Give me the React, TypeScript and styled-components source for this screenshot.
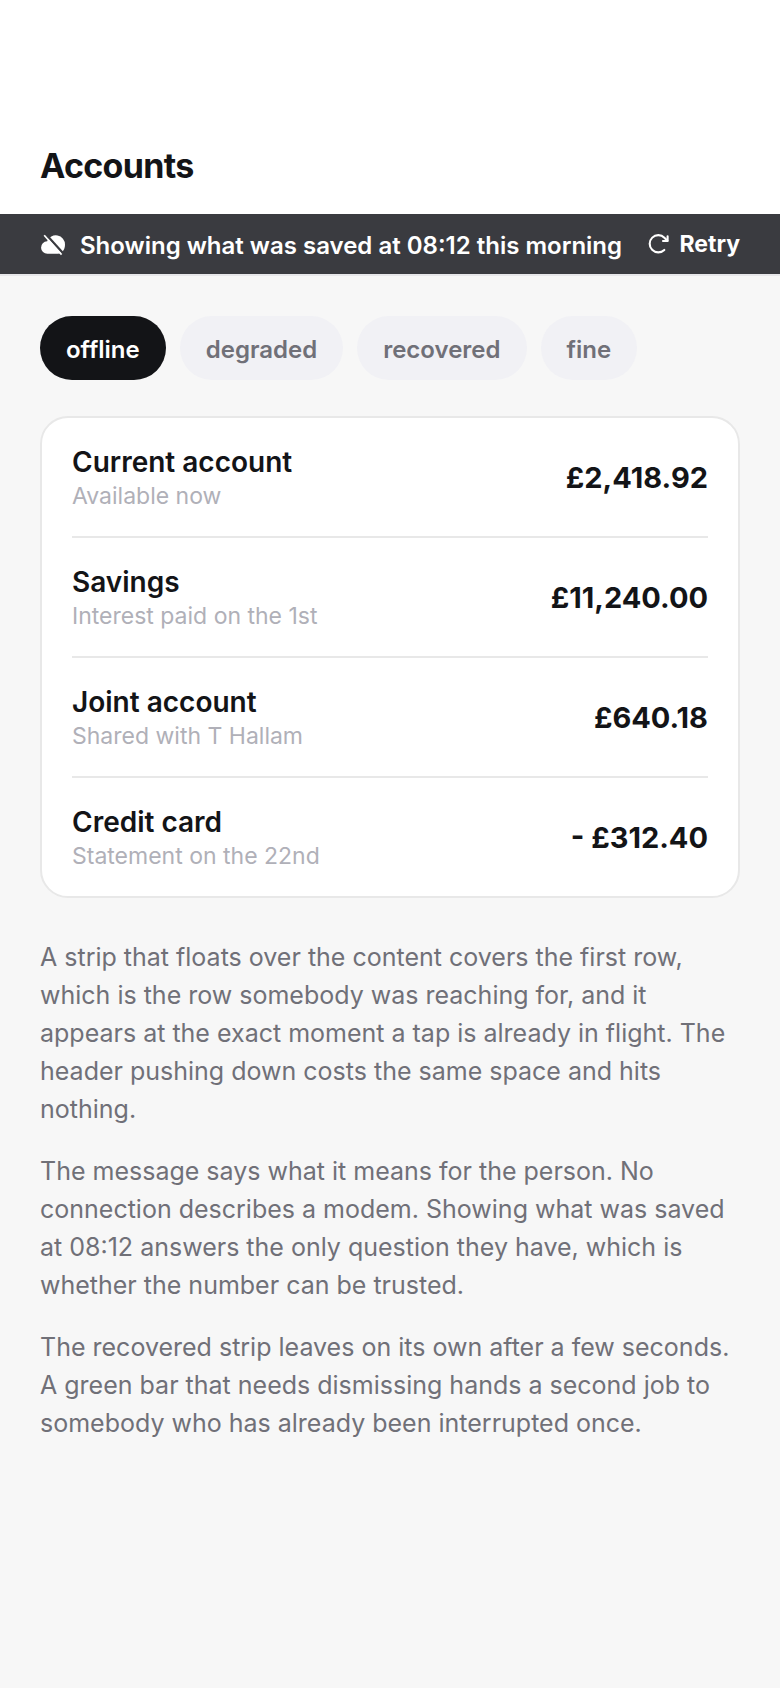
import { useState } from "react";
import styled, { createGlobalStyle } from "styled-components";

const GlobalStyle = createGlobalStyle`
  *, *::before, *::after { box-sizing: border-box; }
  body {
    margin: 0;
    background: #f7f7f7;
    color: #131417;
    font-family: Inter, "Liberation Sans", sans-serif;
  }
  h1, h2, p, ul { margin: 0; padding: 0; }
  button { font: inherit; border: 0; cursor: pointer; }
`;

const Header = styled.header`
  padding-top: 118px;
  background: #ffffff;
  border-bottom: 2px solid #e7e7ea;
`;

const Title = styled.h1`
  padding: 24px 40px 24px;
  font-size: 34px;
  line-height: 48px;
  font-weight: 700;
  letter-spacing: -0.02em;
`;

const Strip = styled.div`
  display: flex;
  align-items: center;
  gap: 14px;
  min-height: 60px;
  padding: 0 40px;
  background: #3a3b40;
  color: #ffffff;
  font-size: 24px;
  line-height: 32px;
  font-weight: 600;

  svg { flex: none; }
`;

const StripMessage = styled.p`
  flex: 1;
  padding-top: 4px;
`;

const RetryButton = styled.button`
  display: flex;
  align-items: center;
  gap: 9px;
  padding: 0;
  background: none;
  color: inherit;
  font-size: 23px;
  font-weight: 700;
`;

const Content = styled.main`
  display: flex;
  flex-direction: column;
  padding: 40px;
`;

const Chips = styled.div`
  display: flex;
  flex-wrap: wrap;
  gap: 14px;
  margin-bottom: 36px;
`;

const Chip = styled.button<{ $active: boolean }>`
  padding: 18px 26px 14px;
  border-radius: 32px;
  background: ${({ $active }) => ($active ? "#131417" : "#f1f1f5")};
  color: ${({ $active }) => ($active ? "#ffffff" : "#707078")};
  font-size: 24px;
  line-height: 32px;
  font-weight: 600;
`;

const Card = styled.ul`
  margin-bottom: 40px;
  padding: 0 30px;
  list-style: none;
  background: #ffffff;
  border: 2px solid #e8e8e8;
  border-radius: 28px;
`;

const Account = styled.li`
  display: flex;
  align-items: center;
  justify-content: space-between;
  gap: 24px;
  padding: 25px 0;

  & + & { border-top: 2px solid #e8e8e8; }
`;

const AccountName = styled.h2`
  font-size: 28px;
  line-height: 38px;
  font-weight: 600;
`;

const AccountNote = styled.p`
  color: #b0b0b8;
  font-size: 23px;
  line-height: 30px;
`;

const Amount = styled.span`
  padding-top: 2px;
  font-size: 29px;
  line-height: 38px;
  font-weight: 700;
  white-space: nowrap;
`;

const Notes = styled.section`
  display: flex;
  flex-direction: column;
  gap: 24px;
  color: #707078;
  font-size: 25px;
  line-height: 38px;
`;

const CloudOffIcon = () => (
  <svg width="26" height="24" viewBox="0 0 26 24" fill="none" aria-hidden>
    <path
      d="M7.5 21.8A6.3 6.3 0 0 1 7.2 9.2A9.2 9.2 0 0 1 25 12.6C25 17.8 22 21.8 18 21.8Z"
      fill="#ffffff"
    />
    <path d="M4.5 .8L24 22.4" stroke="#3a3b40" strokeWidth="2.4" />
    <path d="M4.2 3.2L21.6 22.6" stroke="#ffffff" strokeWidth="1.7" />
  </svg>
);

const RetryIcon = () => (
  <svg
    width="24"
    height="24"
    viewBox="0 0 24 24"
    fill="none"
    stroke="currentColor"
    strokeWidth="2.1"
    strokeLinecap="round"
    strokeLinejoin="round"
    aria-hidden
  >
    <path d="M18.3 17.9A8.6 8.6 0 1 1 18.4 5.7L21.4 8.7" />
    <path d="M21.6 4.4V9H17" />
  </svg>
);

const states = ["offline", "degraded", "recovered", "fine"];

const accounts = [
  { name: "Current account", note: "Available now", amount: "£2,418.92" },
  { name: "Savings", note: "Interest paid on the 1st", amount: "£11,240.00" },
  { name: "Joint account", note: "Shared with T Hallam", amount: "£640.18" },
  { name: "Credit card", note: "Statement on the 22nd", amount: "- £312.40" },
];

const notes = [
  "A strip that floats over the content covers the first row, which is the row somebody was reaching for, and it appears at the exact moment a tap is already in flight. The header pushing down costs the same space and hits nothing.",
  "The message says what it means for the person. No connection describes a modem. Showing what was saved at 08:12 answers the only question they have, which is whether the number can be trusted.",
  "The recovered strip leaves on its own after a few seconds. A green bar that needs dismissing hands a second job to somebody who has already been interrupted once.",
];

export default function App() {
  const [active, setActive] = useState("offline");

  return (
    <>
      <GlobalStyle />
      <Header>
        <Title>Accounts</Title>
        <Strip role="status">
          <CloudOffIcon />
          <StripMessage>Showing what was saved at 08:12 this morning</StripMessage>
          <RetryButton type="button">
            <RetryIcon />
            Retry
          </RetryButton>
        </Strip>
      </Header>
      <Content>
        <Chips role="group" aria-label="Connection state">
          {states.map((state) => (
            <Chip
              key={state}
              type="button"
              $active={state === active}
              aria-pressed={state === active}
              onClick={() => setActive(state)}
            >
              {state}
            </Chip>
          ))}
        </Chips>
        <Card>
          {accounts.map(({ name, note, amount }) => (
            <Account key={name}>
              <div>
                <AccountName>{name}</AccountName>
                <AccountNote>{note}</AccountNote>
              </div>
              <Amount>{amount}</Amount>
            </Account>
          ))}
        </Card>
        <Notes>
          {notes.map((note) => (
            <p key={note}>{note}</p>
          ))}
        </Notes>
      </Content>
    </>
  );
}
